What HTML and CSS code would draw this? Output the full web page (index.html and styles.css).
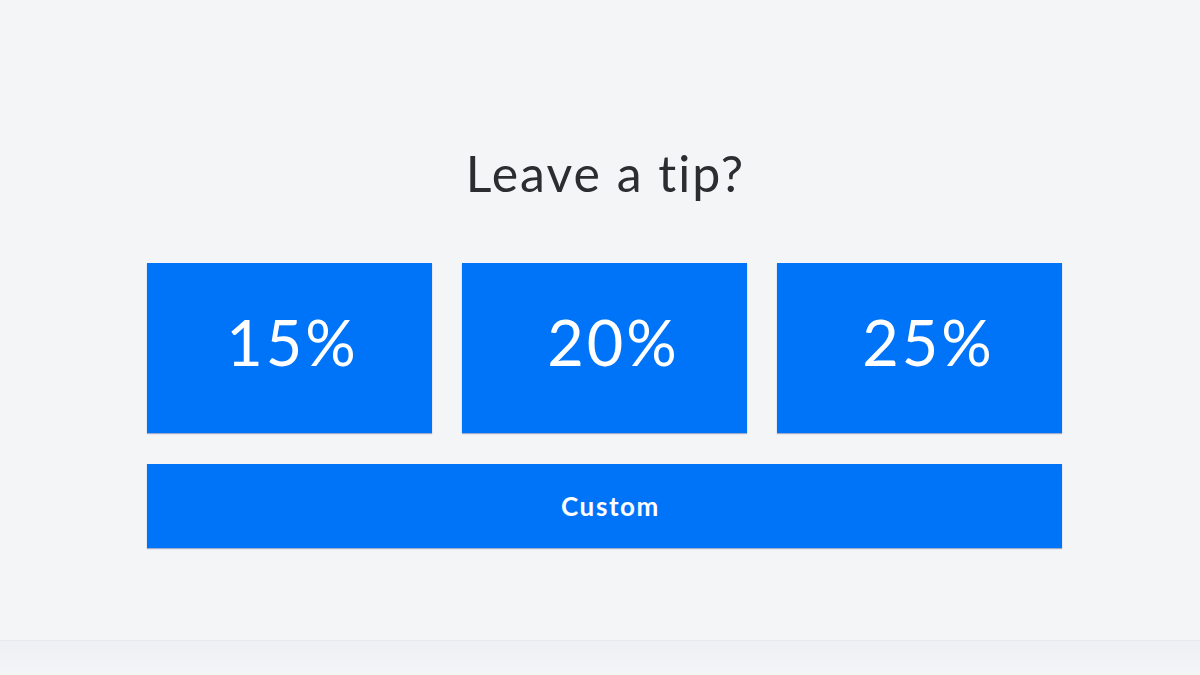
FILE: index.html
```html
<!DOCTYPE html>
<html>
<head>
<meta charset="utf-8">
<link rel="stylesheet" href="styles.css">
</head>
<body>
<div class="page">
  <main class="panel">
    <h1 class="title">Leave a tip?</h1>
    <div class="options">
      <button class="opt">15%</button>
      <button class="opt opt-mid">20%</button>
      <button class="opt opt-mid">25%</button>
    </div>
    <button class="custom">Custom</button>
  </main>
  <footer class="footer"></footer>
</div>
</body>
</html>
```

FILE: styles.css
```css
html, body {
  margin: 0;
  padding: 0;
}
body {
  width: 1200px;
  height: 675px;
  background: #f4f5f7;
  font-family: Lato, "Open Sans", sans-serif;
  overflow: hidden;
}
.page {
  display: flex;
  flex-direction: column;
  height: 675px;
}
.panel {
  height: 640px;
  display: flex;
  flex-direction: column;
  align-items: center;
  box-sizing: border-box;
  padding-top: 143px;
  padding-left: 9px;
}
.title {
  margin: 0 0 0 2px;
  font-weight: 400;
  font-size: 50px;
  line-height: 60px;
  color: #2b2d31;
  letter-spacing: 2px;
}
.options {
  margin-top: 60px;
  display: grid;
  grid-template-columns: repeat(3, 285px);
  gap: 30px;
}
.opt, .custom {
  border: none;
  background: #0074f9;
  color: #fff;
  font-family: Lato, "Open Sans", sans-serif;
  padding: 0;
  margin: 0;
  box-shadow: 0 1px 1px rgba(0, 40, 120, 0.35);
}
.opt {
  height: 170px;
  font-size: 63px;
  font-weight: 400;
  letter-spacing: 3px;
  padding: 0 0 14px 6px;
}
.opt-mid {
  padding-left: 18px;
}
.custom {
  margin-top: 31px;
  width: 915px;
  height: 84px;
  font-size: 26px;
  font-weight: 700;
  letter-spacing: 1.6px;
  padding-left: 12px;
}
.footer {
  flex: 1;
  border-top: 1px solid #e6eaf0;
  background: linear-gradient(#edf0f4, #f3f5f7);
}
```
